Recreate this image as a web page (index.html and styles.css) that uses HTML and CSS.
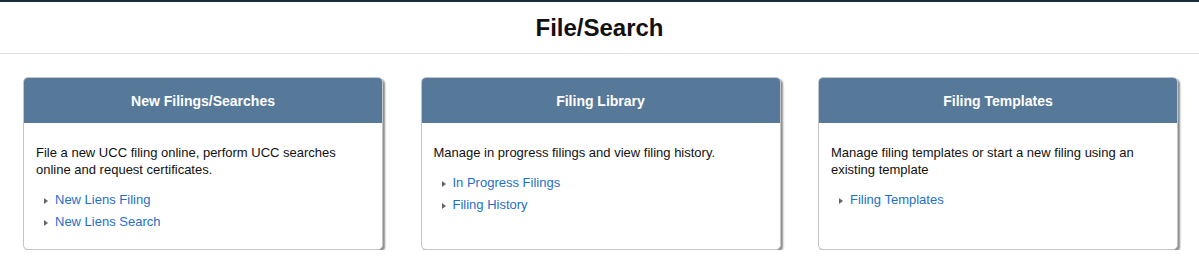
FILE: index.html
```html
<!DOCTYPE html>
<html>
<head>
<meta charset="utf-8">
<link rel="stylesheet" href="styles.css">
</head>
<body>
<header class="page-header">
  <h1 class="page-title">File/Search</h1>
</header>
<main class="cards">
  <section class="card">
    <div class="card-head">New Filings/Searches</div>
    <div class="card-body">
      <p class="card-text">File a new UCC filing online, perform UCC searches online and request certificates.</p>
      <ul class="links">
        <li><a href="#">New Liens Filing</a></li>
        <li><a href="#">New Liens Search</a></li>
      </ul>
    </div>
  </section>
  <section class="card">
    <div class="card-head">Filing Library</div>
    <div class="card-body">
      <p class="card-text">Manage in progress filings and view filing history.</p>
      <ul class="links">
        <li><a href="#">In Progress Filings</a></li>
        <li><a href="#">Filing History</a></li>
      </ul>
    </div>
  </section>
  <section class="card">
    <div class="card-head">Filing Templates</div>
    <div class="card-body">
      <p class="card-text">Manage filing templates or start a new filing using an existing template</p>
      <ul class="links">
        <li><a href="#">Filing Templates</a></li>
      </ul>
    </div>
  </section>
</main>
</body>
</html>
```
FILE: styles.css
```css
html, body {
  margin: 0;
  padding: 0;
  background: #fff;
  font-family: "Liberation Sans", Arial, sans-serif;
  color: #111;
}
.page-header {
  border-top: 2px solid #1b2d3d;
  border-bottom: 1px solid #e0e0e0;
  height: 51px;
  display: flex;
  align-items: center;
  justify-content: center;
}
.page-title {
  margin: 0;
  font-size: 24px;
  font-weight: bold;
  color: #111;
}
.cards {
  display: grid;
  grid-template-columns: repeat(3, 360px);
  column-gap: 37.5px;
  padding: 23px 23px 0;
}
.card {
  height: 173px;
  box-sizing: border-box;
  border: 1px solid #c4c4c4;
  border-radius: 5px;
  box-shadow: 2px 2px 2px rgba(0,0,0,0.45);
  overflow: hidden;
  background: #fff;
}
.card-head {
  height: 45px;
  background: #56799a;
  color: #fff;
  font-weight: bold;
  font-size: 14px;
  display: flex;
  align-items: center;
  justify-content: center;
}
.card-body {
  padding: 21px 12px 0;
}
.card-text {
  margin: 0;
  font-size: 13px;
  line-height: 17px;
  color: #111;
}
.links {
  list-style: none;
  margin: 11px 0 0;
  padding: 0 0 0 8px;
}
.links li {
  font-size: 13px;
  line-height: 22px;
  display: flex;
  align-items: center;
}
.links li::before {
  content: "";
  width: 0;
  height: 0;
  border-top: 3px solid transparent;
  border-bottom: 3px solid transparent;
  border-left: 4px solid #666;
  margin: 2px 7px 0 0;
}
.links a {
  color: #1f6fc8;
  text-decoration: none;
}
```
